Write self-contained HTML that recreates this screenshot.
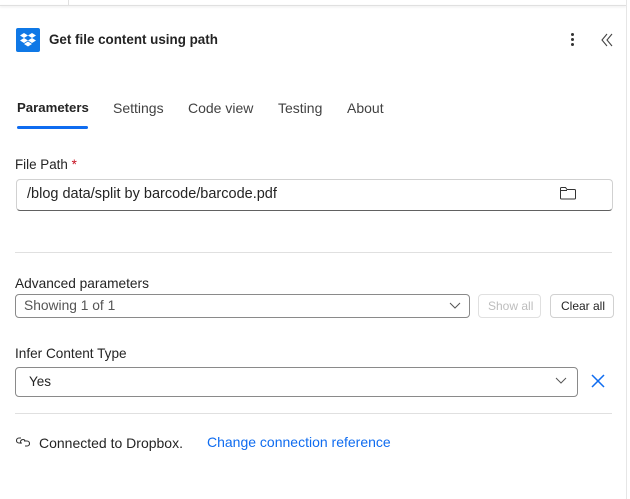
<!DOCTYPE html><html><head><style>
body{margin:0;width:630px;height:499px;background:#fff;position:relative;overflow:hidden;font-family:"Liberation Sans",sans-serif;color:#242424}
.a{position:absolute;white-space:nowrap}
.box{position:absolute;border:1px solid #8a8a8a;border-radius:4px;box-sizing:border-box;background:#fff}
</style></head><body>
<div class="a" style="left:0;top:5px;width:626px;height:1px;background:#e0e0e0;box-shadow:0 1px 2px rgba(0,0,0,.12)"></div>
<div class="a" style="left:68px;top:0;width:1px;height:5px;background:#e0e0e0"></div>
<div class="a" style="left:626px;top:0;width:1px;height:499px;background:#e6e6e6"></div>
<div class="a" style="left:16px;top:28px;width:24px;height:24px;background:#0f78e6;border-radius:2px">
<svg width="24" height="24" viewBox="0 0 24 24"><g fill="#fff"><path d="M8 5l-4 2.5 4 2.5 4-2.5z"/><path d="M16 5l-4 2.5 4 2.5 4-2.5z"/><path d="M4 12.5l4 2.5 4-2.5-4-2.5z"/><path d="M20 12.5l-4 2.5-4-2.5 4-2.5z"/><path d="M8 16l4 2.5 4-2.5-4-2.5z"/></g></svg></div>
<div class="a" style="left:49px;top:32px;font-size:13.4px;font-weight:bold">Get file content using path</div>
<div class="a" style="left:571px;top:33px;width:3px;height:3px;border-radius:2px;background:#333;box-shadow:0 5px 0 #333,0 10px 0 #333"></div>
<svg class="a" style="left:600px;top:33px" width="14" height="14" viewBox="0 0 14 14"><path d="M7 1L2 7l5 6M12 1L7 7l5 6" stroke="#444" fill="none" stroke-width="1.1"/></svg>
<div class="a" style="left:17px;top:100px;font-size:13.2px;font-weight:bold;color:#242424">Parameters</div>
<div class="a" style="left:17px;top:126px;width:71px;height:3px;border-radius:2px;background:#0f6cf0"></div>
<div class="a" style="left:113px;top:100px;font-size:14px;color:#424242">Settings</div>
<div class="a" style="left:188px;top:100px;font-size:14px;color:#424242">Code view</div>
<div class="a" style="left:278px;top:100px;font-size:14px;color:#424242">Testing</div>
<div class="a" style="left:347px;top:100px;font-size:14px;color:#424242">About</div>
<div class="a" style="left:15px;top:157px;font-size:13.4px">File Path <span style="color:#c50f1f">*</span></div>
<div class="box" style="left:16px;top:179px;width:597px;height:32px;border-color:#d1d1d1;border-bottom-color:#616161"></div>
<div class="a" style="left:27px;top:186px;font-size:14.5px">/blog data/split by barcode/barcode.pdf</div>
<svg class="a" style="left:559px;top:185px" width="18" height="16" viewBox="0 0 18 16"><path d="M1.5 3.5v9.5a1 1 0 0 0 1 1h13a1 1 0 0 0 1-1V5.5a1 1 0 0 0-1-1H8L6.5 2.5h-4a1 1 0 0 0-1 1zM1.5 5.5H8" stroke="#333" fill="none" stroke-width="1"/></svg>
<div class="a" style="left:15px;top:252px;width:597px;height:1px;background:#e0e0e0"></div>
<div class="a" style="left:15px;top:276px;font-size:13.7px">Advanced parameters</div>
<div class="box" style="left:15px;top:294px;width:455px;height:24px"></div>
<div class="a" style="left:24px;top:298px;font-size:13.8px;color:#555">Showing 1 of 1</div>
<svg class="a" style="left:448px;top:300px" width="14" height="12"><path d="M2 3l5 5 5-5" stroke="#555" fill="none"/></svg>
<div class="box" style="left:478px;top:294px;width:63px;height:24px;border-color:#e0e0e0"></div>
<div class="a" style="left:488px;top:299px;font-size:12px;color:#bdbdbd">Show all</div>
<div class="box" style="left:550px;top:294px;width:64px;height:24px;border-color:#d1d1d1"></div>
<div class="a" style="left:561px;top:299px;font-size:12px">Clear all</div>
<div class="a" style="left:15px;top:346px;font-size:13.6px">Infer Content Type</div>
<div class="box" style="left:15px;top:367px;width:563px;height:30px"></div>
<div class="a" style="left:29px;top:374px;font-size:13.5px">Yes</div>
<svg class="a" style="left:554px;top:375px" width="14" height="12"><path d="M2 3l5 5 5-5" stroke="#555" fill="none"/></svg>
<svg class="a" style="left:590px;top:373px" width="16" height="16"><path d="M2 2l12 12M14 2L2 14" stroke="#0f6cf0" stroke-width="1.5"/></svg>
<div class="a" style="left:15px;top:413px;width:597px;height:1px;background:#e0e0e0"></div>
<svg class="a" style="left:16px;top:436px" width="14" height="12" viewBox="0 0 14 12"><path d="M5 2h-2a2.5 2.5 0 0 0 0 5h3M9 10h2a2.5 2.5 0 0 0 0-5H8M5 7.5a2 2 0 0 1 4-3" stroke="#333" fill="none" stroke-width="1.1"/></svg>
<div class="a" style="left:39px;top:435px;font-size:14px">Connected to Dropbox.</div>
<div class="a" style="left:207px;top:434px;font-size:14px;color:#0f6cf0">Change connection reference</div>
</body></html>
